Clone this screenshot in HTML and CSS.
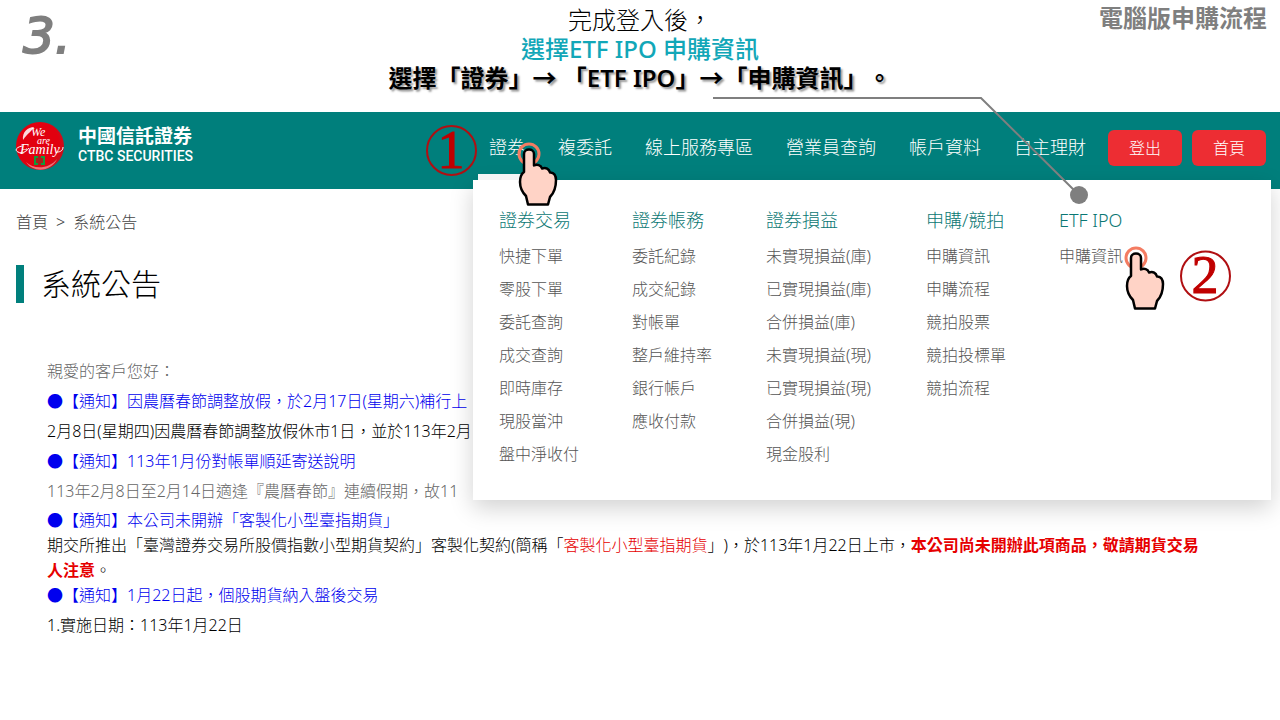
FILE: index.html
```html
<!DOCTYPE html>
<html lang="zh-Hant">
<head>
<meta charset="utf-8">
<title>系統公告</title>
<link rel="stylesheet" href="styles.css">
</head>
<body>
<div class="intro">
  <div class="step">3.</div>
  <div class="guide">
    <p>完成登入後，</p>
    <p class="guide-target">選擇ETF IPO 申購資訊</p>
    <p class="guide-path">選擇「證券」→ 「ETF IPO」→「申購資訊」。</p>
  </div>
  <div class="edition">電腦版申購流程</div>
</div>

<header class="header">
  <a class="brand" href="#">
    <svg class="brand-mark" viewBox="0 0 50 50" aria-hidden="true">
      <defs><radialGradient id="ball" cx="0.45" cy="0.45" r="0.55"><stop offset="0.8" stop-color="#e2000f"/><stop offset="1" stop-color="#c8101c"/></radialGradient></defs>
      <circle cx="25" cy="25" r="24" fill="url(#ball)"/>
      <path d="M8 19C7 11 13 6 19 6c-2 4-6 6-11 13z" fill="#fff" opacity=".85"/>
      <path d="M11 41c8 8 23 7 31-3-5 12-23 15-31 3z" fill="#f07078"/>
      <g class="brand-script"><text x="16" y="15" font-size="12">We</text><text x="22" y="23" font-size="10">are</text><text x="5" y="33" font-size="14">Family</text></g>
      <path d="M7 25c-5 1-8 4-4 6s8 0 11-4M42 31c4 0 6-2 6-5" fill="none" stroke="#fff" stroke-width="1"/>
      <path d="M19 35h11v9H19z" fill="#a8201c"/>
      <path d="M23 36h-3v7h3M26 36h3v7h-3" fill="none" stroke="#129a3a" stroke-width="2"/>
    </svg>
    <span class="brand-name"><span class="brand-zh">中國信託證券</span><span class="brand-en">CTBC SECURITIES</span></span>
  </a>
  <nav class="nav">
    <a href="#">證券</a>
    <a href="#">複委託</a>
    <a href="#">線上服務專區</a>
    <a href="#">營業員查詢</a>
    <a href="#">帳戶資料</a>
    <a href="#">自主理財</a>
  </nav>
  <div class="actions">
    <button type="button">登出</button>
    <button type="button">首頁</button>
  </div>

  <div class="mega">
    <section><h2>證券交易</h2><a href="#">快捷下單</a><a href="#">零股下單</a><a href="#">委託查詢</a><a href="#">成交查詢</a><a href="#">即時庫存</a><a href="#">現股當沖</a><a href="#">盤中淨收付</a></section>
    <section><h2>證券帳務</h2><a href="#">委託紀錄</a><a href="#">成交紀錄</a><a href="#">對帳單</a><a href="#">整戶維持率</a><a href="#">銀行帳戶</a><a href="#">應收付款</a></section>
    <section><h2>證券損益</h2><a href="#">未實現損益(庫)</a><a href="#">已實現損益(庫)</a><a href="#">合併損益(庫)</a><a href="#">未實現損益(現)</a><a href="#">已實現損益(現)</a><a href="#">合併損益(現)</a><a href="#">現金股利</a></section>
    <section><h2>申購/競拍</h2><a href="#">申購資訊</a><a href="#">申購流程</a><a href="#">競拍股票</a><a href="#">競拍投標單</a><a href="#">競拍流程</a></section>
    <section><h2>ETF IPO</h2><a href="#">申購資訊</a></section>
  </div>

  <svg class="notes" viewBox="420 90 860 230" aria-hidden="true">
    <defs>
      <g id="hand">
        <circle cx="0" cy="0" r="10" fill="none" stroke="#f47c62" stroke-width="3"/>
        <path d="M-5 0C-5-6 5-6 5 0V11.500C8 10 12 11 13 14.500C17 13 20 15 21 18.500C25 18 27 22 27 26C27 34 25 39 21 43L19 50.500H-1L-3 42C-7 38-9 33-9 28C-9 23-8 20-5 18Z" fill="#ffd3c6" stroke="#000" stroke-width="2.500" stroke-linejoin="round"/>
      </g>
    </defs>
    <path d="M713 98H981L1079 195" fill="none" stroke="#7f7f7f" stroke-width="2"/>
    <circle cx="1079" cy="195" r="9" fill="#7f7f7f"/>
    <circle class="ring" cx="451.500" cy="150.500" r="24.500"/>
    <text class="number" x="451" y="168">1</text>
    <circle class="ring" cx="1205.500" cy="276" r="24.500"/>
    <text class="number" x="1205" y="293">2</text>
    <use href="#hand" x="529" y="154"/>
    <use href="#hand" x="1136" y="258"/>
  </svg>
</header>

<main class="main">
  <div class="crumbs"><a href="#">首頁</a><span>&gt;</span><span>系統公告</span></div>
  <h1>系統公告</h1>
  <article class="news">
    <p class="muted">親愛的客戶您好：</p>
    <p class="notice">●【通知】因農曆春節調整放假，於2月17日(星期六)補行上</p>
    <p>2月8日(星期四)因農曆春節調整放假休市1日，並於113年2月</p>
    <p class="notice">●【通知】113年1月份對帳單順延寄送說明</p>
    <p class="muted">113年2月8日至2月14日適逢『農曆春節』連續假期，故11</p>
    <div class="compact">
      <p class="notice">●【通知】本公司未開辦「客製化小型臺指期貨」</p>
      <p>期交所推出「臺灣證券交易所股價指數小型期貨契約」客製化契約(簡稱「<span class="red">客製化小型臺指期貨</span>」)，於113年1月22日上市，<strong class="red">本公司尚未開辦此項商品，敬請期貨交易人注意</strong>。</p>
      <p class="notice">●【通知】1月22日起，個股期貨納入盤後交易</p>
    </div>
    <p>1.實施日期：113年1月22日</p>
  </article>
</main>
</body>
</html>
```
FILE: styles.css
```css
* { box-sizing: border-box; }
body, p, h1, h2 { margin: 0; }
body {
  background: #fff;
  color: #111;
  font: 300 16px/24px "Noto Sans", "Noto Sans CJK TC", sans-serif;
  text-spacing-trim: space-all;
}
a { color: inherit; text-decoration: none; }

.intro {
  display: grid;
  grid-template-columns: 1fr auto 1fr;
  height: 112px;
}
.step {
  padding: 8px 0 0 23px;
  color: #7f7f7f;
  font: oblique 50px/56px "DejaVu Sans", sans-serif;
  -webkit-text-stroke: 2px #7f7f7f;
}
.guide {
  padding-top: 5px;
  text-align: center;
  color: #000;
  font-size: 24px;
  line-height: 29px;
}
.guide-target { color: #12a7b8; font-weight: 500; }
.guide-path { font-weight: 600; text-shadow: 2px 2px 2px #999; }
.edition {
  padding: 4px 13px 0 0;
  text-align: right;
  color: #7f7f7f;
  font-size: 24px;
  font-weight: 600;
  line-height: 28px;
}

.header {
  position: relative;
  display: flex;
  align-items: flex-start;
  height: 77px;
  padding: 9px 14px 0 15px;
  background: #007f7c;
  color: #fff;
}
.brand { display: flex; gap: 13px; margin-right: auto; }
.brand-mark { width: 50px; height: 50px; }
.brand-script { fill: #fff; font-family: "Liberation Serif", serif; font-style: italic; }
.brand-name { display: flex; flex-direction: column; padding-top: 5px; }
.brand-zh { font-size: 19px; font-weight: 600; line-height: 21px; }
.brand-en { font: 500 14px/18px Roboto, sans-serif; }
.nav { display: flex; gap: 33px; padding-top: 14px; font-size: 18px; }
.nav a { white-space: nowrap; }
.actions { display: flex; gap: 10px; padding: 9px 0 0 22px; }
.actions button {
  width: 74px;
  height: 36px;
  padding: 0;
  border: 0;
  border-radius: 6px;
  background: #ed2d33;
  color: #fff;
  font: inherit;
}

.mega {
  position: absolute;
  z-index: 1;
  top: 68px;
  right: 9px;
  display: grid;
  grid-template-columns: 133px 134px 160px 133px 1fr;
  width: 798px;
  height: 320px;
  padding: 26px;
  background: #fff;
  box-shadow: 0 8px 22px rgba(0, 0, 0, .18);
  color: #555;
}
.mega::before {
  content: "";
  position: absolute;
  top: -6px;
  left: 5px;
  width: 60px;
  height: 6px;
  background: #f3f5f5;
}
.mega h2 { margin-bottom: 6px; color: #0b7773; font-size: 18px; font-weight: 300; line-height: 28px; }
.mega a { display: block; line-height: 33px; }

.notes {
  position: absolute;
  z-index: 2;
  top: -22px;
  right: 0;
  width: 860px;
  height: 230px;
  pointer-events: none;
}
.ring { fill: none; stroke: #b00f12; stroke-width: 2px; }
.number { fill: #c00000; stroke: #c00000; stroke-width: 1px; font: 54px "Liberation Serif", serif; text-anchor: middle; }

.main { padding: 21px 16px 40px; }
.crumbs { display: flex; gap: 8px; color: #444; }
h1 {
  margin-top: 31px;
  padding-left: 17px;
  border-left: 8px solid #007f7c;
  color: #000;
  font-size: 30px;
  font-weight: 300;
  line-height: 38px;
}
.news { padding: 53px 31px 0; color: #000; line-height: 30px; }
.compact { padding: 2px 24px 2px 0; line-height: 25px; }
.news .muted { color: #666; }
.news .notice { color: #00e; }
.red { color: #e60000; }
strong { font-weight: 600; }
```
